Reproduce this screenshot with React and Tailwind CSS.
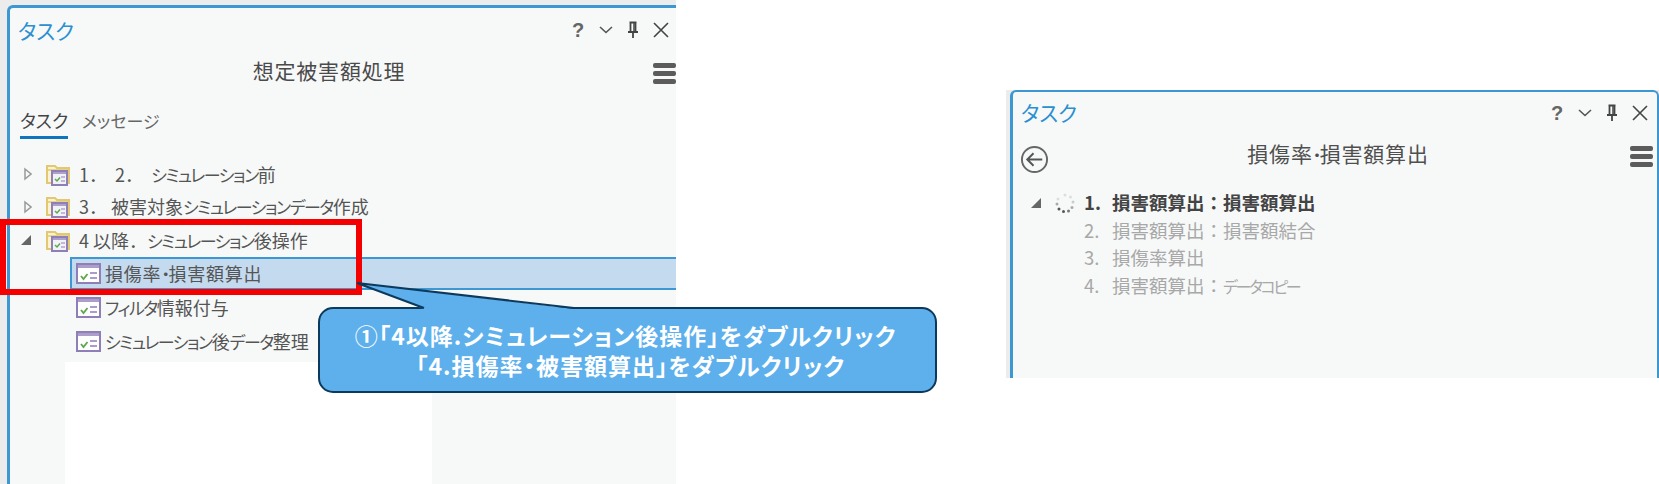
const jp = "font-['Noto_Sans_CJK_JP','Noto_Sans',sans-serif]"

// katakana in the reference is much narrower than the kanji around it
const K = ({ children, tight }) => (
  <span className={`[font-feature-settings:'palt'] ${tight ? 'text-[16px] tracking-[-2.4px]' : 'text-[17px] tracking-[-1.5px]'}`}>{children}</span>
)

const TaskIcon = () => (
  <svg viewBox="0 0 25 21" className="w-[25px] h-[21px] shrink-0">
    <rect x="1" y="1" width="23" height="19" fill="#fff" stroke="#8f7fb8" strokeWidth="2" />
    <rect x="1" y="1" width="23" height="4" fill="#8f7fb8" opacity="0.75" />
    <path d="M5 13l2.5 3 4-5" fill="none" stroke="#5aa84a" strokeWidth="1.8" />
    <path d="M14 10h7M14 15h7" stroke="#8f7fb8" strokeWidth="1.6" />
  </svg>
)

const FolderIcon = () => (
  <svg viewBox="0 0 25 23" className="w-[25px] h-[23px] shrink-0">
    <path d="M1 20V3h8l2 2h12v15z" fill="#fbf3cf" stroke="#e2c873" strokeWidth="2" />
    <path d="M2 7h21" stroke="#e2c873" strokeWidth="1.5" />
    <rect x="6" y="8" width="15" height="14" fill="#f3f1f8" stroke="#8f7fb8" strokeWidth="2" />
    <rect x="6" y="8" width="15" height="3" fill="#8f7fb8" opacity="0.7" />
    <path d="M9 16l2 2 3-3.5" fill="none" stroke="#5aa84a" strokeWidth="1.5" />
    <path d="M15 14h4M15 18h4" stroke="#8f7fb8" strokeWidth="1.2" />
  </svg>
)

const Caret = ({ open }) => (
  <svg viewBox="0 0 12 14" className="w-[12px] h-[14px] shrink-0">
    {open ? (
      <path d="M1 12L11 2v10z" fill="#666" />
    ) : (
      <path d="M5 2l6 5-6 5z" fill="none" stroke="#999" strokeWidth="1.5" />
    )}
  </svg>
)

const PanelIcons = () => (
  <div className="flex items-center gap-[14px]">
    <span className="w-[14px] text-center font-['Liberation_Sans',sans-serif] text-[20px] font-bold leading-none text-[#666]">?</span>
    <svg viewBox="0 0 14 8" className="w-[14px] h-[8px]">
      <path d="M1 1l6 5.5L13 1" fill="none" stroke="#555" strokeWidth="1.6" />
    </svg>
    <svg viewBox="0 0 12 18" className="w-[12px] h-[18px]">
      <path d="M2.5 1.5h7M3.5 1.5v9M8.5 1.5v9M1 11h10M6 11v6" fill="none" stroke="#444" strokeWidth="1.8" />
      <path d="M7 2v8" stroke="#444" strokeWidth="1.5" />
    </svg>
    <svg viewBox="0 0 16 16" className="w-[16px] h-[16px]">
      <path d="M1 1l14 14M15 1L1 15" fill="none" stroke="#444" strokeWidth="1.6" />
    </svg>
  </div>
)

const Hamburger = () => (
  <div className="flex flex-col gap-[3px] w-[23px]">
    <div className="h-[5px] rounded-[2px] bg-[#5c5c5c]" />
    <div className="h-[5px] rounded-[2px] bg-[#5c5c5c]" />
    <div className="h-[5px] rounded-[2px] bg-[#5c5c5c]" />
  </div>
)

const Spinner = () => {
  const dots = [
    [10, 2, '#ddd'], [15.5, 4, '#ddd'], [18, 9, '#ccc'], [17, 14.5, '#aaa'],
    [13.5, 18, '#777'], [8.5, 18.5, '#555'], [4, 16, '#555'], [2, 11, '#aaa'], [3, 6, '#ddd']
  ]
  return (
    <svg viewBox="0 0 20 21" className="w-[20px] h-[21px] shrink-0">
      {dots.map(([x, y, c]) => <circle key={`${x}-${y}`} cx={x} cy={y} r="1.5" fill={c} />)}
    </svg>
  )
}

const treeRows = [
  { id: 'a', label: <>1．  2．  <K>シミュレーション</K>前</>, h: 'h-[32px]' },
  { id: 'b', label: <>3． 被害対象<K>シミュレーションデータ</K>作成</>, h: 'h-[33px]' },
  { id: 'c', label: <>4 以降．<K>シミュレーション</K>後操作</>, h: 'h-[34px]', open: true }
]

const taskRows = [
  { id: 'd', label: <>損傷率<K>・</K>損害額算出</>, h: 'h-[33px]', selected: true },
  { id: 'e', label: <><K>フィルタ</K>情報付与</>, h: 'h-[34px]' },
  { id: 'f', label: <><K>シミュレーション</K>後<K>データ</K>整理</>, h: 'h-[34px]' }
]

const steps = [
  { n: '2.', label: <>損害額算出：損害額結合</>, h: 'h-[27px]' },
  { n: '3.', label: <>損傷率算出</>, h: 'h-[28px]' },
  { n: '4.', label: <>損害額算出：<K tight>データコピー</K></>, h: 'h-[27px]' }
]

export default function App() {
  return (
    <div className={`relative flex items-start w-[1659px] h-[484px] overflow-hidden bg-white ${jp}`}>
      {/* left panel */}
      <div className="w-[676px] h-[484px] shrink-0 bg-[#ececec] pl-[7px] pt-[5px]">
        <div className="flex flex-col h-full border-l-[3px] border-t-[3px] border-[#3c97d3] rounded-tl-[6px] bg-[#f7f9f9]">
          <div className="flex items-center justify-between h-[40px] pl-[8px] pr-[7px] pt-[4px]">
            <span className="text-[21px] leading-none text-[#2b8fd1] [font-feature-settings:'palt']">タスク</span>
            <PanelIcons />
          </div>
          <div className="relative flex justify-center items-center h-[34px] mt-[5px] pr-[28px]">
            <span className="text-[21px] leading-none tracking-[0.8px] text-[#4a4a4a]">想定被害額処理</span>
            <div className="absolute right-0 top-[10px]"><Hamburger /></div>
          </div>
          <div className="flex gap-[14px] pl-[10px] mt-[21px] h-[36px] text-[18px] leading-none [font-feature-settings:'palt']">
            <span className="h-[31px] border-b-[3px] border-[#0f75bc] text-[#444] pt-[3px]">タスク</span>
            <span className="text-[17px] text-[#666] pt-[4px]">メッセージ</span>
          </div>
          <div className="mt-[14px] text-[18px] text-[#555]">
            {treeRows.map((row) => (
              <div key={row.id} className={`flex items-center pl-[10px] ${row.h}`}>
                <Caret open={row.open} />
                <div className="ml-[14px]"><FolderIcon /></div>
                <span className="ml-[8px] whitespace-pre">{row.label}</span>
              </div>
            ))}
            {taskRows.map((row) => (
              <div
                key={row.id}
                className={`flex items-center ml-[60px] ${row.h} ${row.selected ? 'pl-[4px] border-y-2 border-l-2 border-[#3c97d3] bg-[#c4daef]' : 'pl-[6px]'}`}
              >
                <TaskIcon />
                <span className={`ml-[4px] whitespace-nowrap ${row.selected ? 'tracking-[0.8px]' : ''}`}>{row.label}</span>
              </div>
            ))}
          </div>
          <div className="flex-1 ml-[55px] w-[367px] mt-[4px] bg-white" />
        </div>
      </div>

      {/* right panel */}
      <div className="w-[653px] h-[288px] mt-[90px] ml-[330px] shrink-0 bg-[#ececec] pl-[4px]">
        <div className="flex flex-col h-full border-l-[3px] border-t-[2px] border-r-[2px] border-[#3c97d3] rounded-t-[6px] bg-[#f7f9f9]">
          <div className="flex items-center justify-between h-[41px] pl-[8px] pr-[9px]">
            <span className="text-[21px] leading-none text-[#2b8fd1] [font-feature-settings:'palt']">タスク</span>
            <PanelIcons />
          </div>
          <div className="relative flex justify-center items-center h-[40px] pl-[6px]">
            <span className="text-[21px] leading-none tracking-[0.8px] text-[#4f4f4f]">損傷率<K>・</K>損害額算出</span>
            <svg viewBox="0 0 30 30" className="absolute left-[7px] top-[12px] w-[29px] h-[29px]">
              <circle cx="15" cy="15" r="13" fill="none" stroke="#666" strokeWidth="2" />
              <path d="M23 15H8M14 8.5L7.5 15l6.5 6.5" fill="none" stroke="#555" strokeWidth="2" />
            </svg>
            <div className="absolute right-[4px] top-[13px]"><Hamburger /></div>
          </div>
          <div className="mt-[16px] pl-[17px] text-[18.5px]">
            <div className="flex items-center h-[28px]">
              <Caret open />
              <div className="ml-[13px]"><Spinner /></div>
              <span className="ml-[9px] w-[28px] font-bold text-[#444]">1.</span>
              <span className="font-bold text-[#444] whitespace-nowrap">損害額算出：損害額算出</span>
            </div>
            {steps.map((s) => (
              <div key={s.n} className={`flex items-center ${s.h} pl-[54px] text-[#a8a8a8]`}>
                <span className="w-[28px]">{s.n}</span>
                <span className="whitespace-nowrap">{s.label}</span>
              </div>
            ))}
          </div>
        </div>
      </div>

      {/* red highlight over the tree */}
      <div className="absolute left-0 top-[219px] w-[362px] h-[76px] border-[6px] border-[#f50000]" />

      {/* callout */}
      <div className="absolute left-[318px] top-[307px] flex flex-col items-center justify-center w-[619px] h-[86px] rounded-[15px] border-2 border-[#0d3a5c] bg-[#5db0ec] text-[23px] leading-[30px] tracking-[1px] font-bold text-white [font-feature-settings:'palt']">
        <span className="mr-[4px] whitespace-nowrap">①「4以降.シミュレーション後操作」をダブルクリック</span>
        <span className="ml-[6px] whitespace-nowrap">「4.損傷率・被害額算出」をダブルクリック</span>
      </div>
      <svg viewBox="0 0 220 28" className="absolute left-[356px] top-[282px] w-[220px] h-[28px]">
        <path d="M1 1L68 27H218z" fill="#5db0ec" />
        <path d="M68 26L1 1L218 26" fill="none" stroke="#0d3a5c" strokeWidth="2" />
      </svg>
    </div>
  )
}
